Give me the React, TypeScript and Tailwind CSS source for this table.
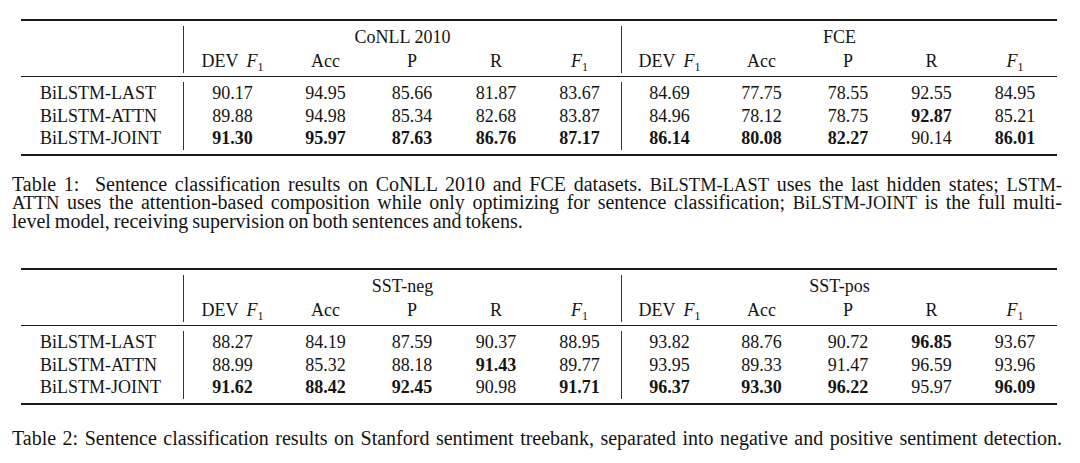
import type { ReactNode } from "react";

// ---------------------------------------------------------------------------
// Data
// ---------------------------------------------------------------------------

type Cell = { v: string; b?: boolean };
type Row = { label: string; cells: Cell[] };
type TableSpec = { groups: [string, string]; rows: Row[] };

// "*" prefix marks a bold (best) value
const c = (s: string): Cell[] =>
  s.split(" ").map((t) => (t.startsWith("*") ? { v: t.slice(1), b: true } : { v: t }));

const TABLE_1: TableSpec = {
  groups: ["CoNLL 2010", "FCE"],
  rows: [
    { label: "BiLSTM-LAST", cells: c("90.17 94.95 85.66 81.87 83.67 84.69 77.75 78.55 92.55 84.95") },
    { label: "BiLSTM-ATTN", cells: c("89.88 94.98 85.34 82.68 83.87 84.96 78.12 78.75 *92.87 85.21") },
    { label: "BiLSTM-JOINT", cells: c("*91.30 *95.97 *87.63 *86.76 *87.17 *86.14 *80.08 *82.27 90.14 *86.01") },
  ],
};

const TABLE_2: TableSpec = {
  groups: ["SST-neg", "SST-pos"],
  rows: [
    { label: "BiLSTM-LAST", cells: c("88.27 84.19 87.59 90.37 88.95 93.82 88.76 90.72 *96.85 93.67") },
    { label: "BiLSTM-ATTN", cells: c("88.99 85.32 88.18 *91.43 89.77 93.95 89.33 91.47 96.59 93.96") },
    { label: "BiLSTM-JOINT", cells: c("*91.62 *88.42 *92.45 90.98 *91.71 *96.37 *93.30 *96.22 95.97 *96.09") },
  ],
};

const GRID =
  "grid grid-cols-[162px_98px_89px_84px_84px_83px_96px_89px_84px_83px_84px]";

// ---------------------------------------------------------------------------
// Pieces
// ---------------------------------------------------------------------------

function F1() {
  return (
    <span>
      <i>F</i>
      <span className="relative top-[4px] text-[12px]">1</span>
    </span>
  );
}

const SUB_HEADERS: ReactNode[] = [
  <span key="d">
    DEV<span className="ml-[8px]" />
    <F1 />
  </span>,
  "Acc",
  "P",
  "R",
  <F1 key="f" />,
];

function ResultTable({ spec }: { spec: TableSpec }) {
  return (
    <div className="ml-[21px] w-[1036px] text-[18px] text-[#141414]">
      <div className="h-[2px] bg-[#1a1a1a]" />

      {/* Header */}
      <div className={`${GRID} grid-rows-[23px_24px] pt-[5px] pb-[3px] leading-[23px]`}>
        <div className="row-span-2" />
        {spec.groups.map((g) => (
          <div key={g} className="col-span-5 border-l border-[#333] text-center">
            {g}
          </div>
        ))}
        {[0, 1].map((gi) =>
          SUB_HEADERS.map((h, i) => (
            <div
              key={`${gi}-${i}`}
              className={`text-center leading-[24px] ${i === 0 ? "border-l border-[#333]" : ""}`}
            >
              {h}
            </div>
          ))
        )}
      </div>

      <div className="h-px bg-[#1a1a1a]" />

      {/* Body */}
      <div className={`${GRID} pt-[5px] pb-[4px]`}>
        {spec.rows.map((r) => (
          <div key={r.label} className="contents">
            <div className="h-[22.5px] pl-[19px] leading-[22.5px]">{r.label}</div>
            {r.cells.map((cell, i) => (
              <div
                key={i}
                className={`h-[22.5px] text-center leading-[22.5px] ${cell.b ? "font-bold" : ""} ${
                  i === 0 || i === 5 ? "border-l border-[#333]" : ""
                }`}
              >
                {cell.v}
              </div>
            ))}
          </div>
        ))}
      </div>

      <div className="h-[2px] bg-[#1a1a1a]" />
    </div>
  );
}

function Sm({ children }: { children: ReactNode }) {
  return <span className="text-[18.5px]">{children}</span>;
}

// ---------------------------------------------------------------------------
// Page
// ---------------------------------------------------------------------------

export default function App() {
  return (
    <div className="h-[463px] w-[1080px] overflow-hidden bg-white pt-[19px] font-['Liberation_Serif','Times_New_Roman',serif] text-[#141414]">
      <ResultTable spec={TABLE_1} />

      {/* Caption 1: lines broken as in the paper */}
      <div className="ml-[12px] mt-[20px] w-[1050px] text-[20px] leading-[17.5px] [word-spacing:-1px]">
        <div className="text-justify [text-align-last:justify]">
          Table 1:&nbsp; Sentence classification results on CoNLL 2010 and FCE datasets.{" "}
          <Sm>BiLSTM-LAST</Sm> uses the last hidden states; <Sm>LSTM-</Sm>
        </div>
        <div className="text-justify [text-align-last:justify]">
          <Sm>ATTN</Sm> uses the attention-based composition while only optimizing for sentence
          classification; <Sm>BiLSTM-JOINT</Sm> is the full multi-
        </div>
        <div>level model, receiving supervision on both sentences and tokens.</div>
      </div>

      <div className="mt-[38px]">
        <ResultTable spec={TABLE_2} />
      </div>

      <div className="ml-[12px] mt-[25px] w-[1050px] text-[20px] leading-[17.5px] [word-spacing:-1px]">
        <div className="text-justify [text-align-last:justify]">
          Table 2: Sentence classification results on Stanford sentiment treebank, separated into
          negative and positive sentiment detection.
        </div>
      </div>
    </div>
  );
}
